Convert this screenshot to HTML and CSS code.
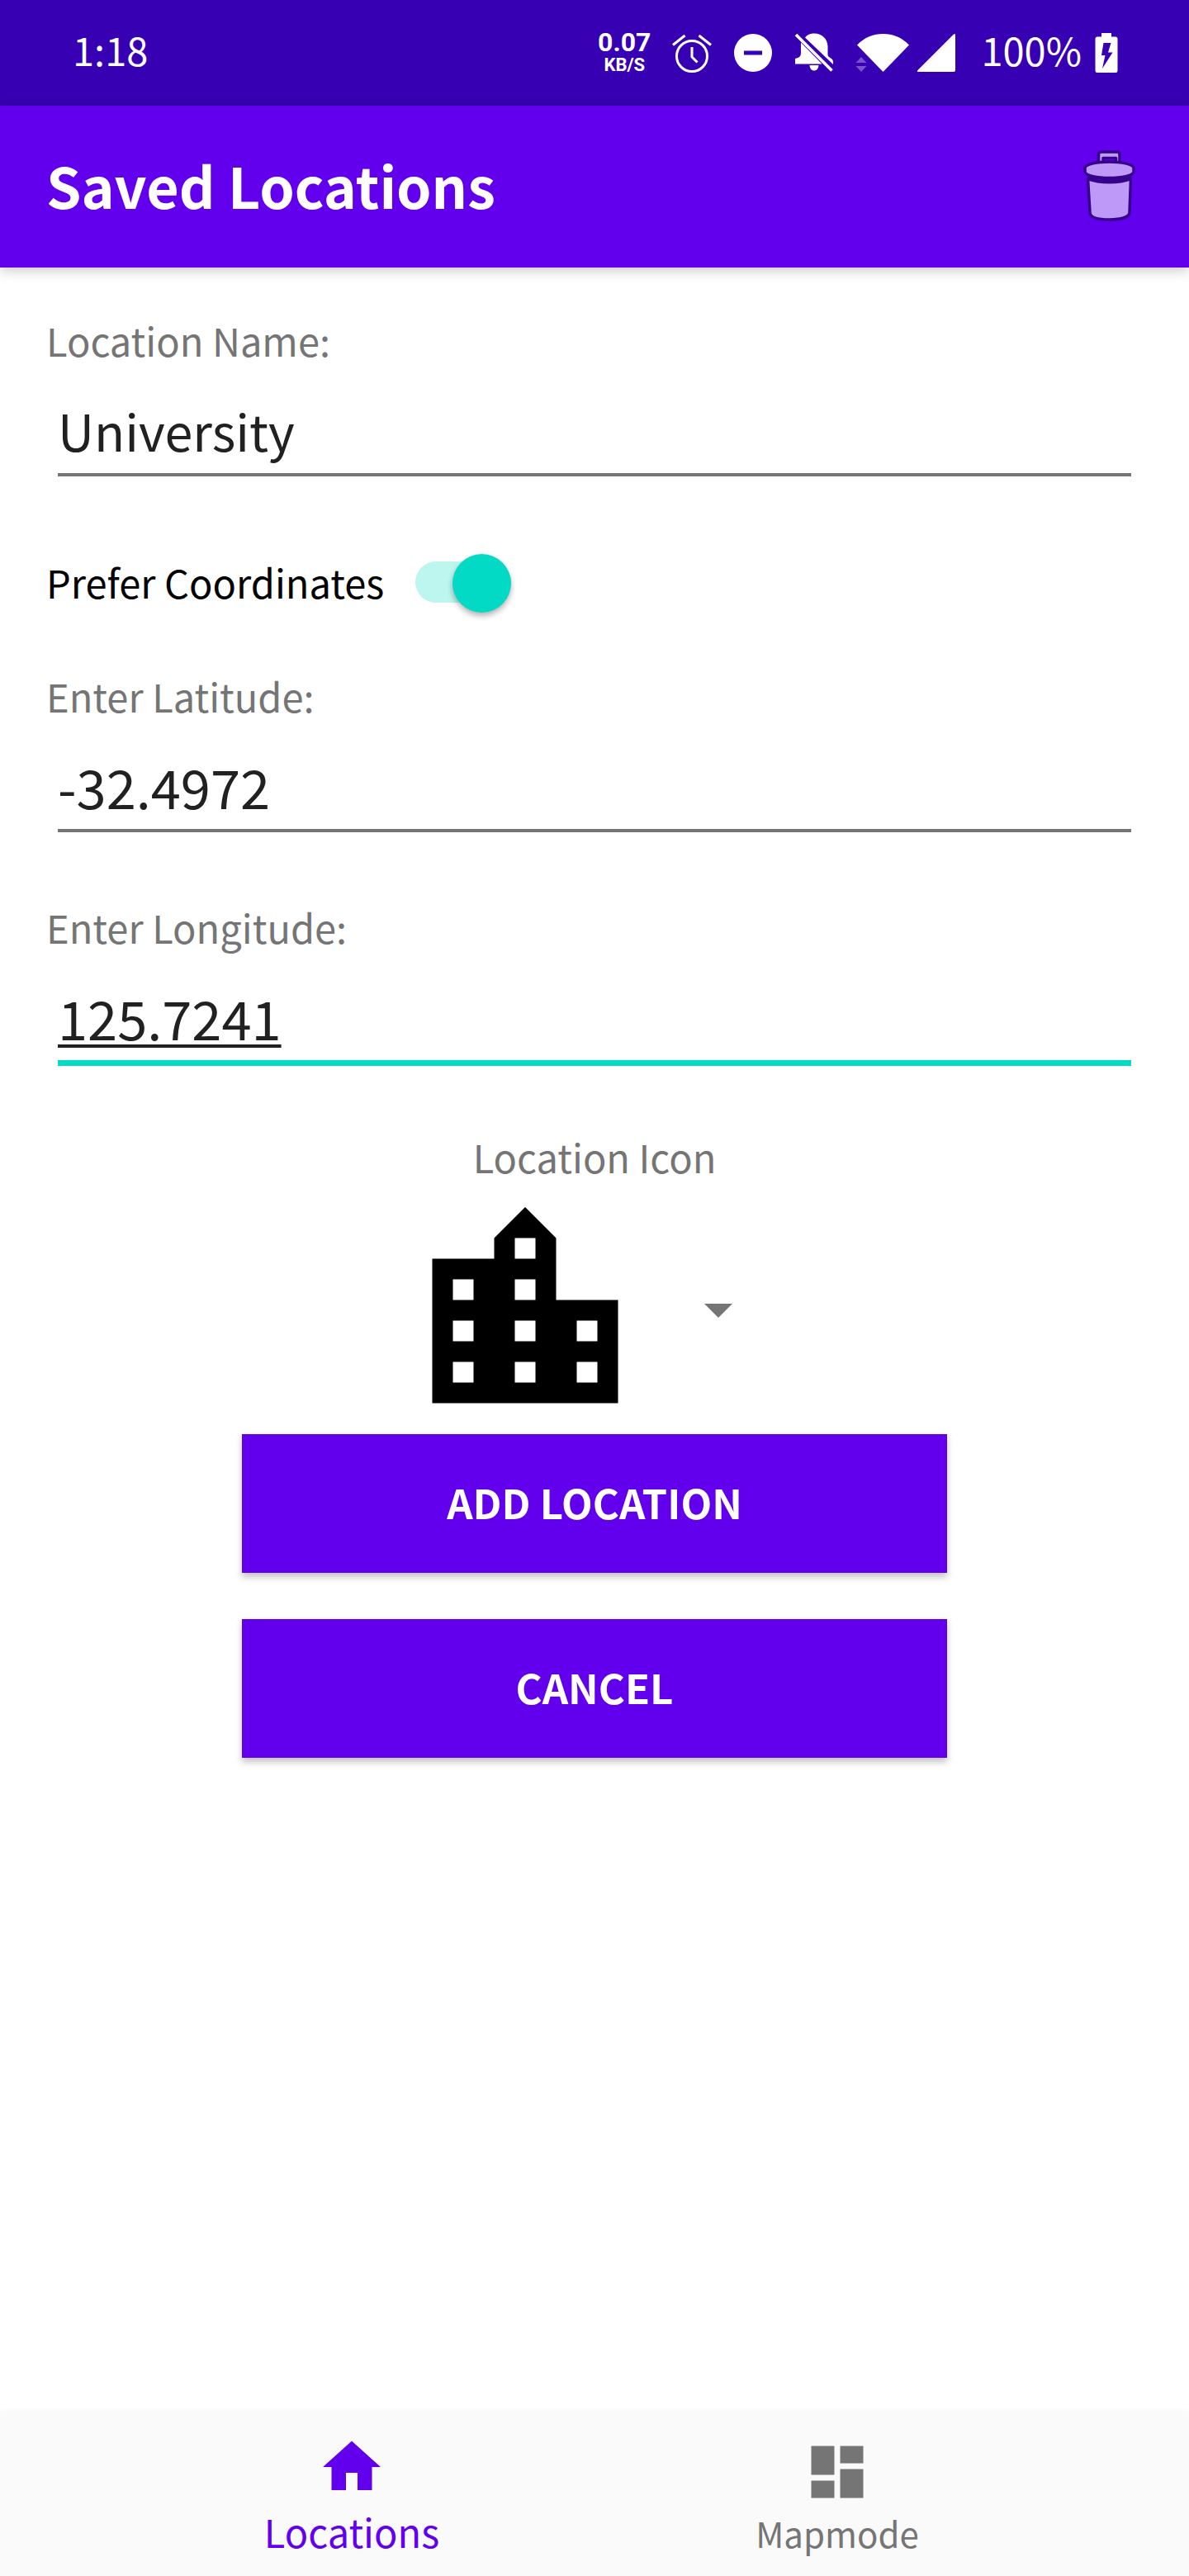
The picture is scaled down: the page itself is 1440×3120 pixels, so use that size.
FILE: index.html
```html
<!DOCTYPE html>
<html lang="en">
<head>
<meta charset="utf-8">
<meta name="viewport" content="width=device-width, initial-scale=1">
<title>Saved Locations</title>
<link rel="stylesheet" href="styles.css">
</head>
<body>
<div class="screen">
  <div class="status-bar">
    <span class="status-text">1:18</span>
    <div class="indicators">
      <div class="net-speed"><span class="net-value">0.07</span><span class="net-unit">KB/S</span></div>
      <svg class="icon-48" viewBox="0 0 48 48" fill="none" stroke="#fff" stroke-width="3" aria-hidden="true">
        <circle cx="24" cy="28" r="18.5"/><path d="M24 17v12l6.500 6.500M1 14.500 15.500 3M47 14.500 32.500 3"/>
      </svg>
      <svg class="icon-48" viewBox="0 0 48 48" aria-hidden="true">
        <path fill="#fff" fill-rule="evenodd" d="M24 1a23 23 0 1 1 0 46a23 23 0 1 1 0-46zM13 21.500v5h22v-5z"/>
      </svg>
      <svg class="icon-48" viewBox="0 0 48 48" aria-hidden="true">
        <path fill="#fff" d="M13 5.500C16 1.500 20 .5 24 .5c10 0 16.500 7 16.500 16v10c0 3 6.500 4 6.500 8v3.500zM8 11.500 33.500 37.500H1V31c5-1 7-3 7-7zM18.500 39h11c-.5 4.500-2.500 6.500-5.500 6.500s-5-2-5.500-6.500z"/>
        <path stroke="#fff" stroke-width="3.500" d="M2 2 45.500 45.500"/>
      </svg>
      <div class="signals">
        <svg class="icon-wifi" viewBox="0 0 66 48" aria-hidden="true">
          <path fill="#fff" d="M2 14.500C11 5 22 1 33.500 1S56 5 65 14.500L33.500 47z"/>
          <path fill="#7a52cb" d="M.5 36 7 29l6.500 7zM.5 40h13L7 47z"/>
        </svg>
        <svg class="icon-48" viewBox="0 0 48 48" aria-hidden="true">
          <path fill="#fff" d="M1.500 45 45 1.500q2-1.500 2 1V45q0 2-2 2H2q-2 0-.5-2z"/>
        </svg>
      </div>
      <div class="battery">
        <span class="status-text">100%</span>
        <svg class="icon-battery" viewBox="0 0 28 48" aria-hidden="true">
          <path fill="#fff" fill-rule="evenodd" d="M8 0h12v4.500h5q2.500 0 2.500 2.500v38.500q0 2.500-2.500 2.500H3Q.5 48 .5 45.500V7q0-2.500 2.500-2.500h5zM10.500 12 8 27h4.500L9 43 21.500 23.500H16L19.500 12z"/>
        </svg>
      </div>
    </div>
  </div>

  <header class="app-bar">
    <h1 class="title">Saved Locations</h1>
    <button class="delete" type="button" aria-label="Delete location">
      <svg viewBox="0 0 64 88" aria-hidden="true">
        <g fill="#bf99f7" stroke="#35008c" stroke-width="3.500" stroke-linejoin="round">
          <path fill-rule="evenodd" d="M18.500 17V5q0-3 3-3H41q3 0 3 3v12zM24 17h15.500V9.500H24z"/>
          <path d="M2 21.500c1-5 15-7.500 29.500-7.500S60 16.500 61 21.500v4.500c-1 5-15 7.500-29.500 7.500S3 31 2 26z"/>
          <path d="M5.500 34.500c14 5.500 38 5.500 52 0L56 75c0 6-10 9-24.500 9S8 81 8 75z"/>
        </g>
        <path fill="none" stroke="#35008c" stroke-width="4" d="M5 32.500c14 5.500 38 5.500 53 0"/>
      </svg>
    </button>
  </header>

  <main class="content">
    <form class="form">
      <div class="field">
        <label for="name">Location Name:</label>
        <input id="name" type="text" value="University">
      </div>
      <div class="switch-row">
        <label for="prefer">Prefer Coordinates</label>
        <input id="prefer" class="switch" type="checkbox" role="switch" checked>
      </div>
      <div class="field">
        <label for="lat">Enter Latitude:</label>
        <input id="lat" class="numeric" type="text" inputmode="decimal" value="-32.4972">
      </div>
      <div class="field">
        <label for="lng">Enter Longitude:</label>
        <input id="lng" class="numeric active" type="text" inputmode="decimal" value="125.7241">
      </div>

      <label class="icon-label" for="icon">Location Icon</label>
      <div class="spinner">
        <svg class="icon-city" viewBox="0 0 24 24" aria-hidden="true"><path d="M15 11V5l-3-3-3 3v2H3v14h18V11h-6zm-8 8H5v-2h2v2zm0-4H5v-2h2v2zm0-4H5V9h2v2zm6 8h-2v-2h2v2zm0-4h-2v-2h2v2zm0-4h-2V9h2v2zm0-4h-2V5h2v2zm6 12h-2v-2h2v2zm0-4h-2v-2h2v2z"/></svg>
        <svg class="caret" viewBox="0 0 34 17" aria-hidden="true"><path d="M0 0h34L17 17z"/></svg>
        <select id="icon" class="spinner-select"><option>City</option></select>
      </div>

      <div class="actions">
        <button class="btn" type="submit">ADD LOCATION</button>
        <button class="btn" type="button">CANCEL</button>
      </div>
    </form>
  </main>

  <nav class="bottom-nav">
    <a class="tab selected" href="#locations" aria-current="page">
      <svg viewBox="0 0 24 24" aria-hidden="true"><path d="M10 20v-6h4v6h5v-8h3L12 3 2 12h3v8z"/></svg>
      <span>Locations</span>
    </a>
    <a class="tab" href="#mapmode">
      <svg viewBox="0 0 24 24" aria-hidden="true"><path d="M3 13h8V3H3v10zm0 8h8v-6H3v6zm10 0h8V11h-8v10zm0-18v6h8V3h-8z"/></svg>
      <span>Mapmode</span>
    </a>
  </nav>
</div>
</body>
</html>
```
FILE: styles.css
```css
:root {
  --primary: #6200ee;
  --primary-dark: #3700b3;
  --accent: #03dac5;
  --muted: #757575;
  --text: #212121;
}

* { box-sizing: border-box; }

body {
  margin: 0;
  background: #fff;
  font: 47px/64px "Noto Sans CJK SC", "Noto Sans", sans-serif;
}

button, input, select { font: inherit; }

svg { display: block; }

.screen {
  display: flex;
  flex-direction: column;
  min-height: 100vh;
}

/* Status bar */
.status-bar {
  display: flex;
  align-items: center;
  justify-content: space-between;
  height: 128px;
  padding: 0 86px 0 88px;
  background: var(--primary-dark);
  color: #fff;
}

.status-text { padding-bottom: 8px; }

.indicators {
  display: flex;
  align-items: center;
  gap: 26px;
}

.net-speed {
  display: flex;
  flex-direction: column;
  align-items: center;
  padding-bottom: 2px;
  font-family: Roboto, sans-serif;
  font-weight: 700;
}

.net-value { font-size: 32px; line-height: 32px; }
.net-unit { font-size: 22px; line-height: 24px; }

.icon-48 { width: 48px; height: 48px; }
.icon-wifi { width: 66px; height: 48px; }
.icon-battery { width: 28px; height: 48px; }

.signals { display: flex; gap: 8px; }

.battery {
  display: flex;
  align-items: center;
  gap: 16px;
  margin-left: 4px;
}

/* App bar */
.app-bar {
  display: flex;
  align-items: center;
  justify-content: space-between;
  height: 196px;
  padding: 0 64px 0 56px;
  background: var(--primary);
  color: #fff;
  box-shadow: 0 4px 14px rgba(0, 0, 0, .2);
}

.title {
  margin: 0;
  padding-bottom: 4px;
  font-size: 68px;
  line-height: 96px;
  font-weight: 700;
}

.delete {
  padding: 0;
  border: 0;
  background: none;
}

.delete svg { width: 64px; height: 88px; }

/* Form */
.content {
  flex: 1;
  padding: 56px;
}

.form {
  display: flex;
  flex-direction: column;
}

.field {
  display: flex;
  flex-direction: column;
  gap: 24px;
  color: var(--muted);
}

.field + .field { margin-top: 83px; }

.field input {
  box-sizing: content-box;
  height: 105px;
  margin: 0 14px;
  padding: 0;
  border: 0;
  border-bottom: 4px solid var(--muted);
  border-radius: 0;
  outline: 0;
  background: none;
  color: var(--text);
  font-size: 61px;
}

.field .numeric { font-size: 65px; }

.field .active {
  border-bottom: 7px solid var(--accent);
  text-decoration: underline;
  text-decoration-thickness: 4px;
  text-underline-offset: 5px;
}

.switch-row {
  display: flex;
  align-items: center;
  gap: 38px;
  margin: 96px 0 74px;
  color: #000;
}

.switch {
  position: relative;
  appearance: none;
  width: 116px;
  height: 50px;
  margin: 0;
  border-radius: 25px;
  background: #bdf5ef;
}

.switch::before {
  content: "";
  position: absolute;
  top: -9px;
  right: 0;
  width: 71px;
  height: 71px;
  border-radius: 50%;
  background: var(--accent);
  box-shadow: 0 4px 7px rgba(0, 0, 0, .3);
}

.icon-label {
  margin-top: 78px;
  text-align: center;
  color: var(--muted);
}

.spinner {
  position: relative;
  align-self: center;
  display: grid;
  grid-template-columns: 300px 168px;
  align-items: center;
  margin-top: 4px;
}

.icon-city { width: 300px; height: 300px; }

.caret {
  justify-self: center;
  width: 34px;
  height: 17px;
  fill: var(--muted);
}

.spinner-select {
  position: absolute;
  inset: 0;
  width: 100%;
  opacity: 0;
}

.actions {
  display: flex;
  flex-direction: column;
  gap: 56px;
  width: 100%;
  padding: 0 237px;
}

.btn {
  height: 168px;
  padding: 0 0 4px;
  border: 0;
  background: var(--primary);
  color: #fff;
  font-size: 49px;
  font-weight: 700;
  box-shadow: 0 5px 8px rgba(0, 0, 0, .24);
}

/* Bottom navigation */
.bottom-nav {
  display: flex;
  justify-content: center;
  height: 199px;
  background: #fafafa;
  box-shadow: 0 0 6px rgba(0, 0, 0, .05);
}

.tab {
  display: flex;
  flex-direction: column;
  align-items: center;
  justify-content: flex-end;
  flex: 0 1 588px;
  padding-bottom: 20px;
  color: var(--muted);
  font-size: 42px;
  text-decoration: none;
}

.tab svg {
  width: 84px;
  height: 84px;
  fill: currentColor;
}

.tab.selected {
  gap: 4px;
  padding-bottom: 22px;
  color: var(--primary);
  font-size: 47px;
}
```
